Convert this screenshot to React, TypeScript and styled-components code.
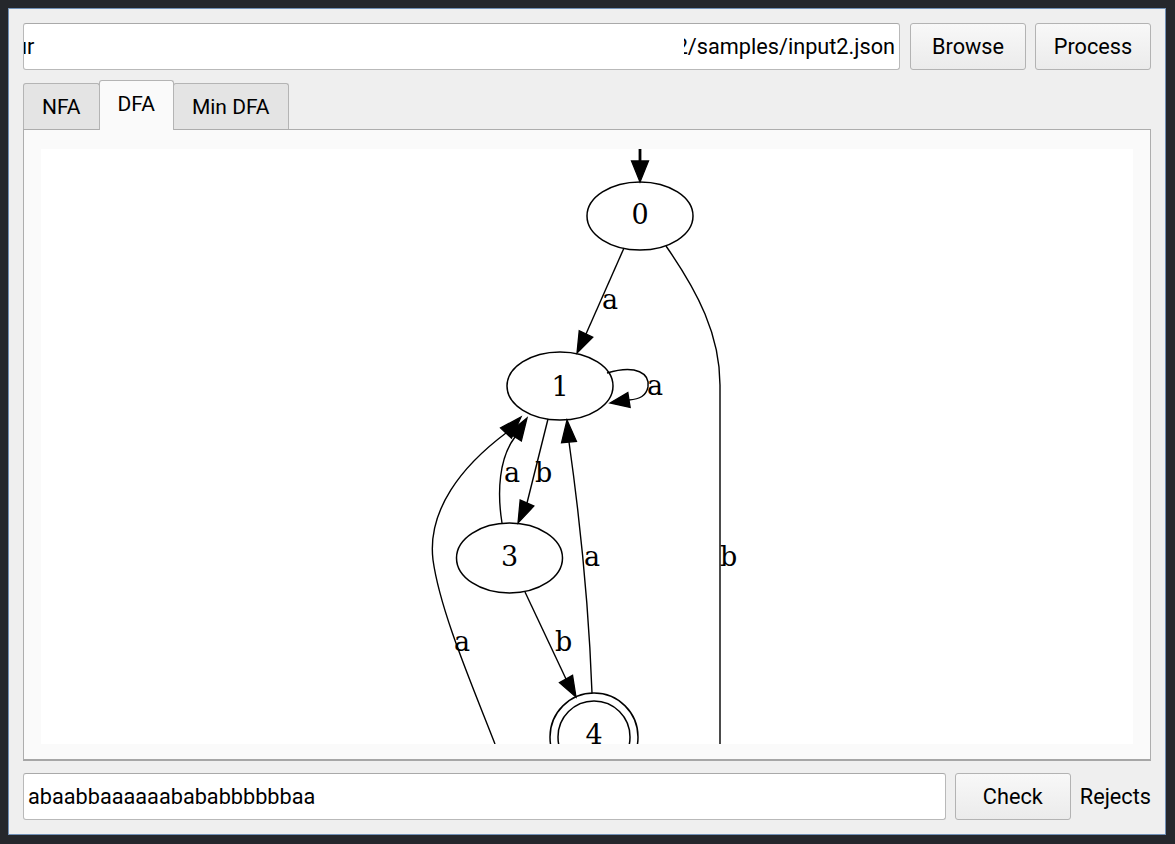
import React from 'react';
import styled, { createGlobalStyle } from 'styled-components';

const GlobalStyle = createGlobalStyle`
  html, body {
    margin: 0;
    padding: 0;
    background: #25272c;
  }
  body {
    font-family: Roboto, 'Liberation Sans', sans-serif;
    color: #000;
  }
  #root {
    box-sizing: border-box;
    width: 1175px;
    height: 844px;
    padding: 8px;
  }
`;

const Window = styled.div`
  box-sizing: border-box;
  width: 1158px;
  height: 827px;
  background: #efefef;
  border: 1px solid #7190b6;
  padding: 14px;
  display: flex;
  flex-direction: column;
`;

const Row = styled.div<{ $gap: number; $top?: number }>`
  display: flex;
  align-items: center;
  height: 47px;
  flex: none;
  gap: ${(p) => p.$gap}px;
  margin-top: ${(p) => p.$top ?? 0}px;
`;

const LineEdit = styled.div`
  box-sizing: border-box;
  flex: 1;
  height: 47px;
  display: flex;
  align-items: center;
  padding: 0 4px;
  background: #fff;
  border: 1px solid #b9b9b9;
  border-top-color: #a9a9a9;
  border-radius: 3px;
  overflow: hidden;
  white-space: nowrap;
  font-size: 21.7px;
`;

const ScrolledHead = styled.span`
  margin-left: -13px;
`;

const Tail = styled.span`
  margin-left: auto;
  display: flex;
`;

const ClippedGlyph = styled.span`
  display: inline-flex;
  justify-content: flex-end;
  width: 4px;
  overflow: hidden;
`;

const Button = styled.button`
  box-sizing: border-box;
  flex: none;
  width: 116px;
  height: 47px;
  border: 1px solid #b3b3b3;
  border-radius: 3px;
  background: linear-gradient(#f8f8f8, #ebebeb);
  font-family: Roboto, 'Liberation Sans', sans-serif;
  font-size: 21.7px;
  color: #000;
  padding: 0;
`;

const Status = styled.span`
  flex: none;
  font-size: 21.7px;
`;

const TabWidget = styled.div`
  flex: none;
  margin-top: 10px;
  display: flex;
  flex-direction: column;
`;

const TabBar = styled.div`
  display: flex;
  align-items: flex-end;
  height: 49px;
`;

const Tab = styled.div<{ $active?: boolean }>`
  box-sizing: border-box;
  position: relative;
  z-index: ${(p) => (p.$active ? 1 : 0)};
  height: ${(p) => (p.$active ? 50 : 46)}px;
  margin-bottom: ${(p) => (p.$active ? -1 : 0)}px;
  margin-left: -1px;
  &:first-child {
    margin-left: 0;
  }
  padding: 0 18px ${(p) => (p.$active ? 4 : 0)}px;
  display: flex;
  align-items: center;
  justify-content: center;
  background: ${(p) => (p.$active ? '#fafafa' : '#e4e4e4')};
  border: 1px solid #b4b4b4;
  border-bottom: none;
  border-radius: 3px 3px 0 0;
  font-size: 21px;
`;

const Pane = styled.div`
  box-sizing: border-box;
  height: 632px;
  background: #fafafa;
  border: 1px solid #adadad;
  border-bottom: 2px solid #a6a6a6;
  padding: 19px 17px 15px 17px;
`;

const Canvas = styled.div`
  width: 1092px;
  height: 595px;
  background: #fff;
  overflow: hidden;
`;

const Label = styled.text`
  font-family: 'DejaVu Serif', 'Liberation Serif', serif;
  font-size: 27px;
  fill: #000;
`;

type Pt = [number, number];

const head = (tip: Pt, base: Pt, half = 7.5) => {
  const dx = tip[0] - base[0];
  const dy = tip[1] - base[1];
  const d = Math.hypot(dx, dy);
  const nx = -dy / d;
  const ny = dx / d;
  return `${tip[0]},${tip[1]} ${base[0] + nx * half},${base[1] + ny * half} ${base[0] - nx * half},${base[1] - ny * half}`;
};

const edges: { d: string; tip?: Pt; base?: Pt }[] = [
  { d: 'M624,248 L586,334', tip: [577, 353], base: [586, 334] },
  { d: 'M607,373 C637,364 650,374 648,387 C646,396 640,399 629,400', tip: [610, 403], base: [629, 400] },
  { d: 'M666,246 C698,292 720,335 720,385 L720,744' },
  { d: 'M548,419 L527,503', tip: [518, 523], base: [527, 503] },
  { d: 'M502,523 C497,492 499,458 515,437', tip: [527, 418], base: [515, 437] },
  { d: 'M592,693 C589,610 580,520 569,442', tip: [567, 420], base: [569, 442] },
  { d: 'M525,592 L566,679', tip: [576, 697], base: [566, 679] },
  { d: 'M495,744 C470,680 440,610 433,560 C427,510 462,466 506,433', tip: [521, 417], base: [506, 433] },
];

const labels: { t: string; x: number; y: number }[] = [
  { t: 'a', x: 602, y: 309 },
  { t: 'a', x: 647, y: 395 },
  { t: 'b', x: 535, y: 482 },
  { t: 'a', x: 504, y: 482 },
  { t: 'a', x: 584, y: 566 },
  { t: 'b', x: 720, y: 566 },
  { t: 'b', x: 555, y: 651 },
  { t: 'a', x: 454, y: 651 },
];

const Graph = () => (
  <svg width={1092} height={595} viewBox="41 149 1092 595">
    <g fill="none" stroke="#000">
      <line x1={640} y1={149} x2={640} y2={161} strokeWidth={2.8} />
      <ellipse cx={640} cy={216} rx={53} ry={34} strokeWidth={1.5} />
      <ellipse cx={560} cy={386} rx={53} ry={34} strokeWidth={1.5} />
      <ellipse cx={509.5} cy={558} rx={53} ry={35} strokeWidth={1.5} />
      <circle cx={594} cy={737} r={44} strokeWidth={1.5} />
      <circle cx={594} cy={737} r={36} strokeWidth={1.5} />
      {edges.map((e, i) => (
        <path key={i} d={e.d} strokeWidth={1.4} />
      ))}
    </g>
    <g fill="#000" stroke="#000" strokeWidth={1.3}>
      <polygon points={head([640, 182], [640, 161], 8.5)} />
      {edges
        .filter((e) => e.tip && e.base)
        .map((e, i) => (
          <polygon key={i} points={head(e.tip as Pt, e.base as Pt)} />
        ))}
    </g>
    <Label x={640} y={224} textAnchor="middle">0</Label>
    <Label x={560} y={396} textAnchor="middle">1</Label>
    <Label x={509.5} y={566} textAnchor="middle">3</Label>
    <Label x={594} y={744} textAnchor="middle">4</Label>
    {labels.map((l, i) => (
      <Label key={i} x={l.x} y={l.y}>
        {l.t}
      </Label>
    ))}
  </svg>
);

export default function App() {
  return (
    <>
      <GlobalStyle />
      <Window>
        <Row $gap={10}>
          <LineEdit>
            <ScrolledHead>ur</ScrolledHead>
            <Tail>
              <ClippedGlyph>2</ClippedGlyph>
              /samples/input2.json
            </Tail>
          </LineEdit>
          <Button style={{ marginRight: -1 }}>Browse</Button>
          <Button>Process</Button>
        </Row>
        <TabWidget>
          <TabBar>
            <Tab>NFA</Tab>
            <Tab $active>DFA</Tab>
            <Tab>Min DFA</Tab>
          </TabBar>
          <Pane>
            <Canvas>
              <Graph />
            </Canvas>
          </Pane>
        </TabWidget>
        <Row $gap={9} $top={12}>
          <LineEdit>abaabbaaaaaabababbbbbbaa</LineEdit>
          <Button>Check</Button>
          <Status>Rejects</Status>
        </Row>
      </Window>
    </>
  );
}
